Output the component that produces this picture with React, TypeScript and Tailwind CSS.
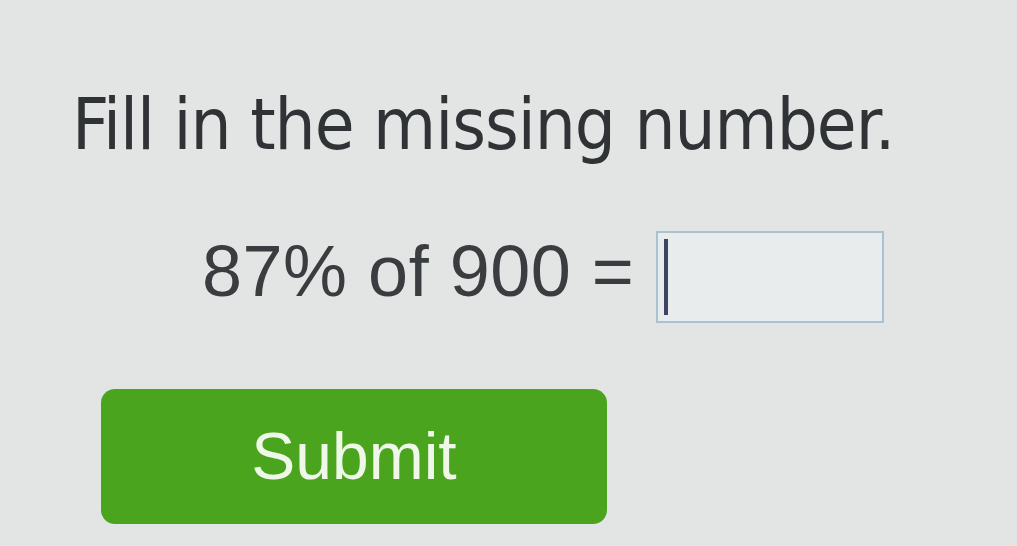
export default function App() {
  return (
    <div className="w-[1017px] h-[546px] overflow-hidden bg-[#e3e5e4] text-[#303335]">
      <div className="pt-[80px] pl-[72px]">
        <h1 className="text-[72px] leading-[88px] tracking-[-1px] font-['DejaVu_Sans_Condensed','DejaVu_Sans',sans-serif] whitespace-nowrap">
          Fill in the missing number.
        </h1>
      </div>
      <div className="mt-[63px] pl-[202px] flex items-start gap-[22px]">
        <span className="text-[72px] leading-[80px] font-['Liberation_Sans',Arial,sans-serif] text-[#3a3d3f] tracking-[0.5px] whitespace-pre">
          87% of 900 =
        </span>
        <div className="w-[228px] h-[92px] border-2 border-[#a9c2cf] bg-[#e8ecec] flex items-center pl-[6px]">
          <div className="w-[4px] h-[76px] bg-[#3d4560]" />
        </div>
      </div>
      <div className="mt-[66px] pl-[101px]">
        <button className="w-[506px] h-[135px] rounded-[14px] bg-[#4aa41e] text-[#eef7e8] text-[66px] font-['Liberation_Sans',Arial,sans-serif] flex items-center justify-center">
          Submit
        </button>
      </div>
    </div>
  );
}
